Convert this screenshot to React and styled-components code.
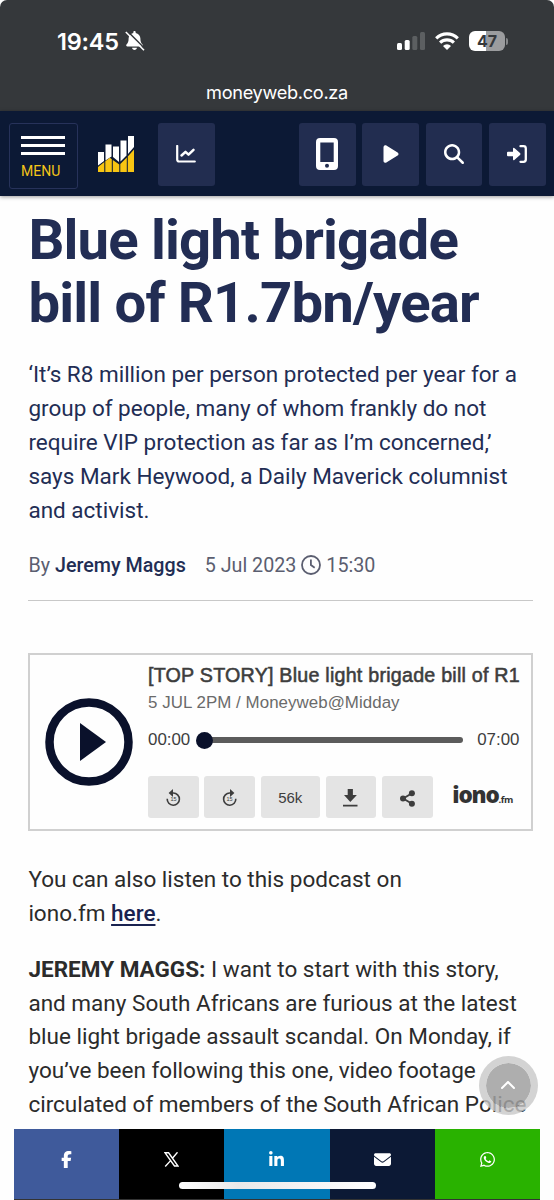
import React from "react";
import styled, { createGlobalStyle } from "styled-components";
import {
  FaBell, FaPlay, FaMagnifyingGlass,
  FaFacebookF, FaLinkedinIn, FaEnvelope, FaWhatsapp, FaChevronUp,
} from "react-icons/fa6";

const GlobalStyle = createGlobalStyle`
  * { box-sizing: border-box; }
  body { margin: 0; background: #fff; }
`;

const Screen = styled.div`
  position: relative;
  width: 554px;
  height: 1200px;
  overflow: hidden;
  display: flex;
  flex-direction: column;
  background: #fefefe;
  font-family: Roboto, sans-serif;
`;

const BrowserTop = styled.div`
  height: 111px;
  flex: none;
  background: #35383b;
  border-radius: 7px 7px 0 0;
  color: #fff;
  font-family: Inter, sans-serif;
`;

const StatusRow = styled.div`
  display: flex;
  align-items: center;
  justify-content: space-between;
  height: 82px;
  padding: 0 46px 0 57px;
`;

const Clock = styled.div`
  display: flex;
  align-items: center;
  gap: 6px;
  font-size: 23.5px;
  font-weight: 600;
  letter-spacing: ${(p) => p.$spacing};
  svg { display: block; }
`;

const StatusIcons = styled.div`
  display: flex;
  align-items: center;
  gap: 10px;
  svg { display: block; }
`;

const BatteryLevel = styled.div`
  display: flex;
  align-items: center;
`;

const BatteryBody = styled.div`
  width: 36px;
  height: 20px;
  border-radius: 6px;
  background: linear-gradient(90deg, #fff 47%, #9b9c9e 47%);
  color: #35383b;
  font-size: 16px;
  font-weight: 700;
  line-height: 20px;
  text-align: center;
`;

const BatteryTip = styled.div`
  width: 2px;
  height: 7px;
  margin-left: 1px;
  border-radius: 0 3px 3px 0;
  background: #858789;
`;

const Address = styled.div`
  text-align: center;
  font-size: 18.2px;
  line-height: 20px;
  letter-spacing: ${(p) => p.$spacing};
`;

const NavBar = styled.nav`
  position: relative;
  flex: none;
  display: flex;
  align-items: flex-start;
  height: 85px;
  padding: 11.5px 8.5px 0 9px;
  background: #0c1935;
  box-shadow: 0 1px 4px rgba(0, 0, 0, 0.4);
  color: #fff;
`;

const MenuButton = styled.div`
  display: flex;
  flex-direction: column;
  gap: 5.4px;
  width: 68.5px;
  height: 66.5px;
  padding: 12px 11px 0;
  border: 1px solid #27325a;
  border-radius: 3px;
  color: #f5c518;
  font-size: 14px;
  line-height: 20px;
`;

const MenuLine = styled.span`
  display: block;
  height: 3px;
  width: 44px;
  background: #fff;
  flex: none;
`;

const Logo = styled.div`
  margin: 13.5px 0 0 20.5px;
  width: 60px;
  svg { display: block; }
`;

const NavButton = styled.div`
  display: flex;
  align-items: center;
  justify-content: center;
  width: 56.5px;
  height: 63px;
  border-radius: 3px;
  background: #222d50;
  svg { display: block; margin-top: -1px; }
`;

const NavGroup = styled.div`
  display: flex;
  gap: 6.8px;
  margin-left: auto;
`;

const Article = styled.main`
  flex: 1;
  min-height: 0;
  overflow: hidden;
  padding: 12.5px 21px 0 28.4px;
  color: #2b2b2b;
`;

const Line = styled.span`
  display: block;
  white-space: nowrap;
  letter-spacing: ${(p) => p.$spacing || "0"};
`;

const Title = styled.h1`
  margin: 0;
  font-size: 56.3px;
  line-height: 63.4px;
  font-weight: 700;
  color: #222d54;
`;

const Summary = styled.p`
  margin: 23px 0 0;
  font-size: 22.5px;
  line-height: 33.8px;
  color: #222d54;
`;

const Byline = styled.div`
  display: flex;
  align-items: center;
  margin-top: 24px;
  height: 28px;
  font-size: 19.7px;
  color: #5b5e70;
  white-space: nowrap;
  svg { margin: 0 5px 0 5px; }
`;

const Author = styled.span`
  margin: 0 19px 0 5px;
  font-weight: 500;
  color: #222d54;
`;

const Divider = styled.div`
  height: 1.5px;
  margin: 20.5px 0 52px;
  background: #c8c8c8;
`;

const Player = styled.section`
  display: flex;
  height: 177.5px;
  padding: 8px 11.5px 0 14.6px;
  border: 2px solid #d0d0d0;
  font-family: "Liberation Sans", sans-serif;
  color: #3d3d3d;
`;

const PlayDisc = styled.div`
  width: 88px;
  height: 88px;
  margin: 35px 15px 0 0;
  flex: none;
`;

const PlayerBody = styled.div`
  flex: 1;
  min-width: 0;
`;

const TrackTitle = styled.div`
  font-size: 19.7px;
  line-height: 24px;
  letter-spacing: ${(p) => p.$spacing};
  -webkit-text-stroke: 0.55px #3d3d3d;
  white-space: nowrap;
`;

const TrackMeta = styled.div`
  margin-top: 4px;
  font-size: 16.9px;
  line-height: 24px;
  letter-spacing: 0.05px;
  color: #6a6a6a;
`;

const Timeline = styled.div`
  display: flex;
  align-items: center;
  height: 24px;
  margin-top: 13px;
  font-size: 16.9px;
`;

const Knob = styled.div`
  width: 17px;
  height: 17px;
  border-radius: 50%;
  background: #0a112b;
  margin-left: 6px;
  position: relative;
  z-index: 1;
`;

const Track = styled.div`
  flex: 1;
  height: 6px;
  margin: 0 14px 0 -3px;
  border-radius: 0 3px 3px 0;
  background: #5c5c5c;
`;

const Controls = styled.div`
  display: flex;
  align-items: center;
  gap: 5.8px;
  margin-top: 24px;
`;

const ControlButton = styled.div`
  display: flex;
  flex: none;
  align-items: center;
  justify-content: center;
  width: ${(p) => p.$width || "50.6px"};
  height: 42px;
  border-radius: 3px;
  background: #e4e4e4;
  font-size: 15px;
  svg { display: block; margin-top: 2px; }
`;

const Brand = styled.div`
  margin: 0 0 0 14px;
  font-family: "Open Sans", sans-serif;
  font-size: 22.5px;
  font-weight: 800;
  letter-spacing: -1.2px;
  line-height: 30px;
  color: #333;
  white-space: nowrap;
  small { font-size: 9.5px; font-weight: 700; letter-spacing: -0.5px; }
`;

const Paragraph = styled.p`
  margin: ${(p) => p.$top} 0 0;
  font-size: 22.52px;
  line-height: 33.8px;
`;

const Here = styled.a`
  color: #1a2350;
  font-weight: 500;
  text-decoration: underline;
  text-decoration-thickness: 1.5px;
  text-underline-offset: 3px;
`;

const ShareBar = styled.div`
  position: relative;
  flex: none;
  display: grid;
  grid-template-columns: repeat(5, 1fr);
  height: 71px;
  margin: 0 14px;
  border-bottom: 1px solid #333;
`;

const ShareLink = styled.div`
  display: flex;
  justify-content: center;
  padding-top: ${(p) => p.$top || "22px"};
  background: ${(p) => p.$color};
  color: #fff;
`;

const HomeIndicator = styled.div`
  position: absolute;
  left: 179px;
  bottom: 11.5px;
  width: 197px;
  height: 7px;
  border-radius: 4px;
  background: linear-gradient(90deg, #fff, #e9e9e9 30%, #fff);
`;

const BackToTop = styled.div`
  position: absolute;
  left: 478.5px;
  top: 1056px;
  width: 59px;
  height: 59px;
  display: flex;
  align-items: center;
  justify-content: center;
  border: 7px solid rgba(200, 200, 200, 0.8);
  border-radius: 50%;
  background: rgba(160, 160, 160, 0.85);
  background-clip: padding-box;
  color: #fff;
`;

const MutedBell = styled.span`
  position: relative;
  display: block;
  width: 20px;
  height: 20px;
  svg:first-child { margin: 0 auto; }
  svg + svg { position: absolute; left: 0; top: 0; }
`;

const BellIcon = () => (
  <MutedBell>
    <FaBell size={19} />
    <svg width="20" height="20" viewBox="0 0 20 20" fill="none">
      <path d="M2.2 0 20 17.8" stroke="#35383b" strokeWidth="1.6" />
      <path d="M.8 1 19 19.2" stroke="#fff" strokeWidth="1.6" />
    </svg>
  </MutedBell>
);

const SignalIcon = () => (
  <svg width="28" height="18" viewBox="0 0 28 18">
    <rect x="0" y="11" width="5" height="7" rx="1.5" fill="#fff" />
    <rect x="7.7" y="8" width="5" height="10" rx="1.5" fill="#fff" />
    <rect x="15.3" y="4" width="5" height="14" rx="1.5" fill="#5c5f61" />
    <rect x="23" y="0" width="5" height="18" rx="1.5" fill="#5c5f61" />
  </svg>
);

const WifiIcon = () => (
  <svg width="24" height="18" viewBox="0 0 24 18" fill="none" stroke="#fff" strokeWidth="3.1">
    <path d="M1.2 6.3A15.3 15.3 0 0 1 22.8 6.3" />
    <path d="M5.1 10.7A9.8 9.8 0 0 1 18.9 10.7" />
    <path d="M12 18 8 14A5.7 5.7 0 0 1 16 14Z" fill="#fff" stroke="none" />
  </svg>
);

const LogoIcon = () => (
  <svg width="36" height="36" viewBox="0 0 36 36">
    <path fill="#fff" d="M0 16h6v9l-6 4.5ZM7.500 8.500h6v12l-6 4ZM15 10.500h6V26l-6-5ZM22.500 4.500h6V19.500l-6 6ZM30 0h6v11l-6 7Z" />
    <path fill="#f8c512" d="M0 31l6.300-5v10H0ZM7.300 25.300l4.500-3.500 2 1.500V36H7.300ZM14.800 24l6.500 4.500V36h-6.500ZM22.300 28l6.500-6.500V36h-6.500ZM29.800 20.500 36 13.500V36h-6.200Z" />
  </svg>
);

const ChartIcon = () => (
  <svg width="20" height="18" viewBox="0 0 20 18" fill="none" stroke="#fff" strokeWidth="2.2" strokeLinecap="round" strokeLinejoin="round">
    <path d="M1.2 1v13.500q0 2 2 2H18.800" />
    <path d="M5.500 10.500 9.500 6.800l3 2.800 5-4.800" strokeWidth="2.500" />
  </svg>
);

const LoginIcon = () => (
  <svg width="20" height="18" viewBox="0 0 20 18">
    <path d="M1 6.8h5V4q0-2 1.600-.7l5.400 4.800q.9.900 0 1.800l-5.400 4.800Q6 16 6 14v-2.800H1q-1 0-1-1V7.800q0-1 1-1Z" fill="#fff" />
    <path d="M13.500 1.200h3q2.300 0 2.300 2.300v11q0 2.300-2.300 2.300h-3" fill="none" stroke="#fff" strokeWidth="2.300" strokeLinecap="round" />
  </svg>
);

const PhoneIcon = () => (
  <svg width="22" height="32" viewBox="0 0 22 32">
    <path fill="#fff" fillRule="evenodd" d="M4 0h14a4 4 0 0 1 4 4v24a4 4 0 0 1-4 4H4a4 4 0 0 1-4-4V4a4 4 0 0 1 4-4ZM4.300 4.500v19.500h13.400V4.500ZM11 25.800a2 2 0 1 0 0 4 2 2 0 0 0 0-4Z" />
  </svg>
);

const ClockIcon = () => (
  <svg width="20" height="20" viewBox="0 0 20 20" fill="none" stroke="#5b5e70" strokeWidth="1.8">
    <circle cx="10" cy="10" r="9" />
    <path d="M9.900 4.500V10l3.800 2.700" />
  </svg>
);

const PlayIcon = () => (
  <svg width="88" height="88" viewBox="0 0 88 88">
    <circle cx="44" cy="44" r="39.500" fill="none" stroke="#0a112b" strokeWidth="8.500" />
    <path d="M35 25v38l26-19Z" fill="#0a112b" />
  </svg>
);

const SkipIcon = ({ forward }) => (
  <svg width="15" height="18" viewBox="0 0 15 18">
    <g transform={forward ? "translate(15 0) scale(-1 1)" : undefined}>
      <path d="M1.200 9.800A6.100 6.100 0 1 0 7.300 4H6" fill="none" stroke="#3d3d3d" strokeWidth="1.600" />
      <path d="M7 0v8L2.600 4Z" fill="#3d3d3d" />
    </g>
    <text x="7.500" y="12.200" textAnchor="middle" fontSize="5.500" fontFamily="Liberation Sans" fill="#3d3d3d">15</text>
  </svg>
);

const DownloadIcon = () => (
  <svg width="15" height="18" viewBox="0 0 15 18" fill="#3d3d3d">
    <path d="M4.700 0h5.200v6h4L7.300 13 1 6h3.700ZM0 15.700h14.500v1.900H0Z" />
  </svg>
);

const ShareIcon = () => (
  <svg width="15" height="17" viewBox="0 0 15 17" fill="#3d3d3d">
    <path d="M12 3.200 3.200 8.500 12 13.700" fill="none" stroke="#3d3d3d" strokeWidth="1.900" />
    <circle cx="11.900" cy="3.200" r="3" />
    <circle cx="3" cy="8.500" r="3" />
    <circle cx="11.900" cy="13.700" r="3" />
  </svg>
);

const XIcon = () => (
  <svg width="15" height="15" viewBox="0 0 15 15" fill="none" stroke="#fff" strokeWidth="1.400">
    <path d="M1.100.8h3.500l9.400 13.200h-3.500ZM13.500.300 8.400 6.200M6.600 8.600 1.200 14.500" />
  </svg>
);

export default function App() {
  return (
    <Screen>
      <GlobalStyle />
      <BrowserTop>
        <StatusRow>
          <Clock $spacing="-0.2px">19:45<BellIcon /></Clock>
          <StatusIcons>
            <SignalIcon />
            <WifiIcon />
            <BatteryLevel>
              <BatteryBody>47</BatteryBody>
              <BatteryTip />
            </BatteryLevel>
          </StatusIcons>
        </StatusRow>
        <Address $spacing="-0.32px">moneyweb.co.za</Address>
      </BrowserTop>
      <NavBar>
        <MenuButton>
          <MenuLine /><MenuLine /><MenuLine />
          <span>MENU</span>
        </MenuButton>
        <Logo><LogoIcon /></Logo>
        <NavButton><ChartIcon /></NavButton>
        <NavGroup>
          <NavButton><PhoneIcon /></NavButton>
          <NavButton><FaPlay size={20} /></NavButton>
          <NavButton><FaMagnifyingGlass size={20} /></NavButton>
          <NavButton><LoginIcon /></NavButton>
        </NavGroup>
      </NavBar>
      <Article>
        <Title>
          <Line $spacing="-0.85px">Blue light brigade</Line>
          <Line $spacing="-0.85px">bill of R1.7bn/year</Line>
        </Title>
        <Summary>
          <Line>‘It’s R8 million per person protected per year for a</Line>
          <Line>group of people, many of whom frankly do not</Line>
          <Line>require VIP protection as far as I’m concerned,’</Line>
          <Line>says Mark Heywood, a Daily Maverick columnist</Line>
          <Line>and activist.</Line>
        </Summary>
        <Byline>
          By <Author>Jeremy Maggs</Author>5 Jul 2023<ClockIcon />15:30
        </Byline>
        <Divider />
        <Player>
          <PlayDisc><PlayIcon /></PlayDisc>
          <PlayerBody>
            <TrackTitle $spacing="0.22px">[TOP STORY] Blue light brigade bill of R1</TrackTitle>
            <TrackMeta>5 JUL 2PM / Moneyweb@Midday</TrackMeta>
            <Timeline>00:00<Knob /><Track />07:00</Timeline>
            <Controls>
              <ControlButton><SkipIcon /></ControlButton>
              <ControlButton><SkipIcon forward /></ControlButton>
              <ControlButton $width="59px">56k</ControlButton>
              <ControlButton><DownloadIcon /></ControlButton>
              <ControlButton><ShareIcon /></ControlButton>
              <Brand>iono<small>.fm</small></Brand>
            </Controls>
          </PlayerBody>
        </Player>
        <Paragraph $top="32px">
          <Line>You can also listen to this podcast on</Line>
          <Line>iono.fm <Here>here</Here>.</Line>
        </Paragraph>
        <Paragraph $top="22.5px">
          <Line><b>JEREMY MAGGS:</b> I want to start with this story,</Line>
          <Line>and many South Africans are furious at the latest</Line>
          <Line>blue light brigade assault scandal. On Monday, if</Line>
          <Line>you’ve been following this one, video footage</Line>
          <Line>circulated of members of the South African Police</Line>
        </Paragraph>
      </Article>
      <ShareBar>
        <ShareLink $color="#3f5a9b"><FaFacebookF size={17} /></ShareLink>
        <ShareLink $color="#000" $top="23px"><XIcon /></ShareLink>
        <ShareLink $color="#0077b5"><FaLinkedinIn size={17} /></ShareLink>
        <ShareLink $color="#0c1935"><FaEnvelope size={17} /></ShareLink>
        <ShareLink $color="#29b200"><FaWhatsapp size={17} /></ShareLink>
      </ShareBar>
      <HomeIndicator />
      <BackToTop><FaChevronUp size={16} /></BackToTop>
    </Screen>
  );
}
